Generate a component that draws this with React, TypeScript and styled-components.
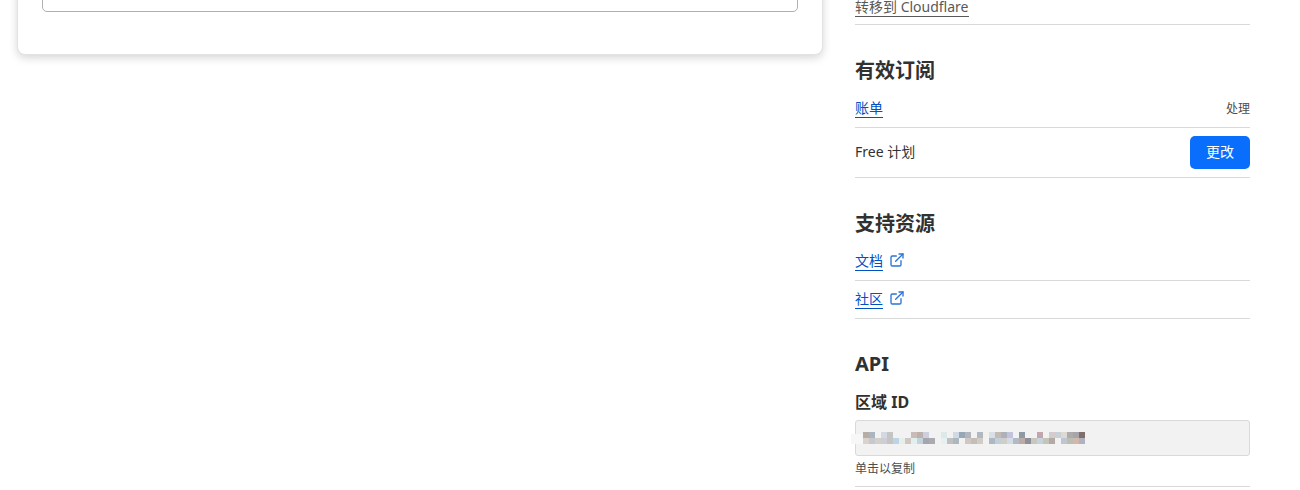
import React from 'react';
import styled, { createGlobalStyle } from 'styled-components';
import { ExternalLink } from 'lucide-react';

const GlobalStyle = createGlobalStyle`
  html, body {
    margin: 0;
    padding: 0;
    height: 490px;
    overflow: hidden;
    background: #ffffff;
  }
  body {
    font-family: "Noto Sans", "Noto Sans CJK SC", sans-serif;
    color: #313131;
  }
`;

const Page = styled.div`
  display: grid;
  grid-template-columns: 806px 395px;
  column-gap: 32px;
  align-items: start;
  padding-left: 17px;
  margin-top: -40px;
`;

const Card = styled.section`
  box-sizing: border-box;
  padding: 24px 24px 42px;
  background: #ffffff;
  border: 1px solid #e2e2e2;
  border-radius: 8px;
  box-shadow: 0 3px 8px rgba(0, 0, 0, 0.16);
`;

const EditorBox = styled.div`
  box-sizing: border-box;
  height: 27px;
  border: 1px solid #b0b0b0;
  border-radius: 5px;
`;

const Sidebar = styled.aside`
  padding-top: 24px;
`;

const Row = styled.div`
  display: flex;
  align-items: flex-start;
  justify-content: space-between;
  padding: 9px 0;
  border-bottom: 1px solid #d9d9d9;
`;

const TransferRow = styled(Row)`
  padding: 14px 0 7px;
`;

const FirstRow = styled(Row)`
  padding-top: 14px;
`;

const PlanRow = styled(Row)`
  align-items: center;
  height: 50px;
  box-sizing: border-box;
  padding: 0;
  font-size: 14px;
`;

const PlanName = styled.span`
  line-height: 18px;
  margin-top: -1px;
`;

const Heading = styled.h2`
  margin: 30px 0 0;
  padding-top: 1px;
  height: 29px;
  font-size: 20px;
  font-weight: 700;
  line-height: 29px;
`;

const ApiHeading = styled(Heading)`
  padding-top: 0;
  height: 30px;
`;

const TextLink = styled.a<{ $muted?: boolean }>`
  display: inline-block;
  font-size: 14px;
  line-height: 18px;
  color: ${(p) => (p.$muted ? '#595959' : '#0051c3')};
  border-bottom: 1px solid ${(p) => (p.$muted ? '#595959' : '#0051c3')};
`;

const LinkGroup = styled.div`
  display: flex;
  align-items: center;
  gap: 6px;
`;

const LinkIcon = styled(ExternalLink)`
  width: 16px;
  height: 16px;
  color: #2a74d8;
  margin-top: -3px;
`;

const SideNote = styled.span`
  padding-top: 1px;
  font-size: 12px;
  line-height: 18px;
  color: #4d4d4d;
`;

const ChangeButton = styled.button`
  width: 60px;
  height: 33px;
  padding: 0 0 4px;
  border: none;
  border-radius: 5px;
  background: #0a6efd;
  color: #ffffff;
  font-family: inherit;
  font-size: 14px;
`;

const ApiBlock = styled.div`
  padding: 12px 0 10px;
  border-bottom: 1px solid #d9d9d9;
`;

const FieldLabel = styled.h3`
  margin: 0 0 7px;
  font-size: 16px;
  font-weight: 700;
  line-height: 22px;
`;

const CopyField = styled.div`
  box-sizing: border-box;
  display: flex;
  align-items: center;
  height: 36px;
  background: #f2f2f2;
  border: 1px solid #d9d9d9;
  border-radius: 3px;
`;

const Mosaic = styled.svg`
  display: block;
  margin-left: -5px;
`;

const Hint = styled.p`
  margin: 5px 0 0;
  height: 15px;
  font-size: 12px;
  line-height: 16px;
  color: #4d4d4d;
`;

// blurred id, one colour per 6px cell, empty cell = field background
const mosaicTop = [
  '#b5aea6', '#a9b5bf', '', '#d3d9e1', '#c4c4c4', '', '', '', '#c9bcb8', '#bdb1ae', '#cccfdd', '', '', '#dfe8e8', '',
  '#d1d9e6', '#98a7b5', '#b2b6bd', '', '#b0b9c2', '#f3f1ec', '#d9dfe6', '#c4bcb4', '#adb1bd', '#c3c4dc', '', '#8c9ba3',
  '', '', '#c2a6ac', '', '#d2cdcc', '#c9d1d6', '#dfd9d4', '#aeabac', '#a5a5aa', '#7f6f6d',
];
const mosaicBottom = [
  '#dbd2cc', '#c5c9cf', '#d3cfcc', '#cdcdd5', '#c4c4c4', '#bdd4e8', '#e8efe9', '#d0c7c5', '#dff0ee', '#c5d3d8', '#a5a5ad',
  '#abaab0', '', '#e5f1f1', '#c0c0c0', '#acb8be', '', '#cfc7c2', '#c4bfb6', '#d1cdc4', '', '#aeb8c2', '#c3ced9', '#cfcfca',
  '#d3dbe5', '#b1bbc7', '#bfaba6', '#8f8f97', '#c7c8c0', '#c7d2dc', '#c3c5b5', '#b3a9a6', '', '#bcc7d1', '#bcbfb0',
  '#d2b8ac', '#b1b1bf',
];

const BlurredId = () => (
  <Mosaic width={234} height={12} viewBox="0 0 234 12" shapeRendering="crispEdges">
    <rect x={0} y={2} width={12} height={10} fill="#f7f7f7" />
    {[mosaicTop, mosaicBottom].map((row, y) =>
      row.map((color, x) =>
        color ? <rect key={`${y}-${x}`} x={12 + x * 6} y={y * 6} width={6} height={6} fill={color} /> : null
      )
    )}
  </Mosaic>
);

export default function App() {
  return (
    <>
      <GlobalStyle />
      <Page>
        <Card>
          <EditorBox />
        </Card>

        <Sidebar>
          <TransferRow>
            <TextLink $muted>转移到 Cloudflare</TextLink>
          </TransferRow>

          <Heading>有效订阅</Heading>
          <FirstRow>
            <TextLink>账单</TextLink>
            <SideNote>处理</SideNote>
          </FirstRow>
          <PlanRow>
            <PlanName>Free 计划</PlanName>
            <ChangeButton>更改</ChangeButton>
          </PlanRow>

          <Heading>支持资源</Heading>
          <FirstRow>
            <LinkGroup>
              <TextLink>文档</TextLink>
              <LinkIcon />
            </LinkGroup>
          </FirstRow>
          <Row>
            <LinkGroup>
              <TextLink>社区</TextLink>
              <LinkIcon />
            </LinkGroup>
          </Row>

          <ApiHeading>API</ApiHeading>
          <ApiBlock>
            <FieldLabel>区域 ID</FieldLabel>
            <CopyField>
              <BlurredId />
            </CopyField>
            <Hint>单击以复制</Hint>
          </ApiBlock>
        </Sidebar>
      </Page>
    </>
  );
}
